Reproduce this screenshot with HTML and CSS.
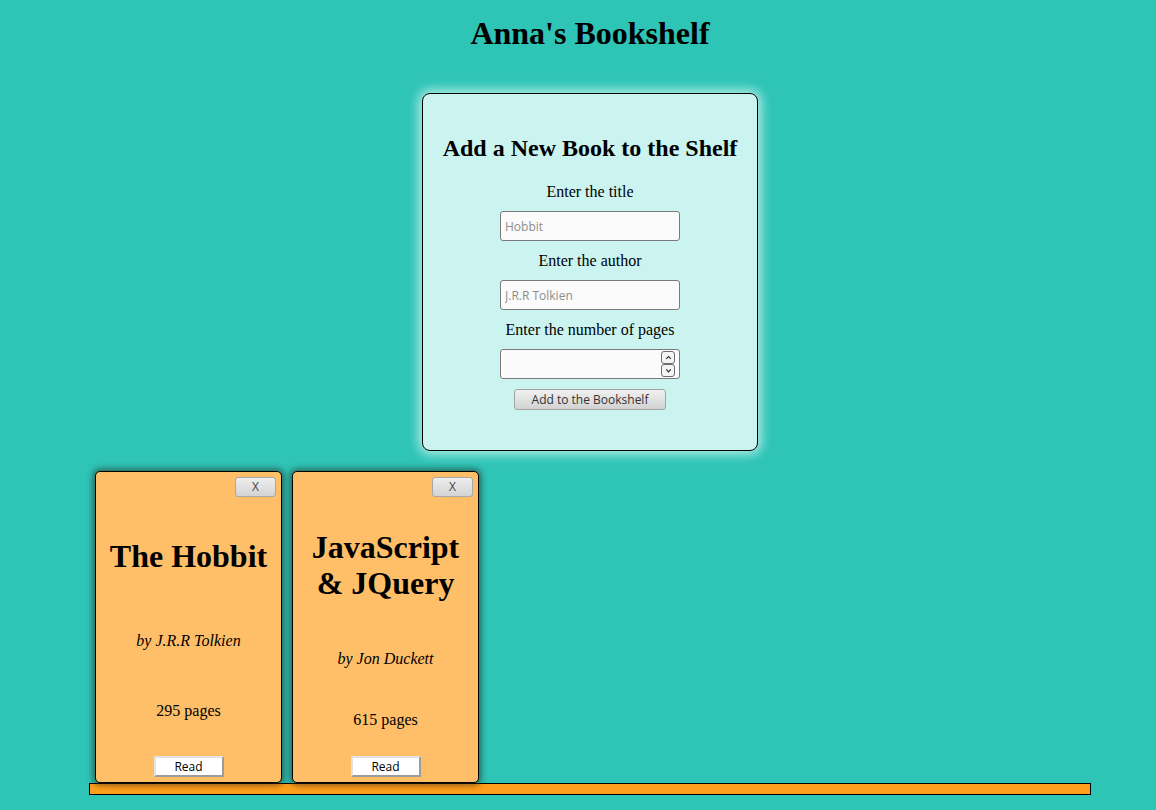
FILE: index.html
```
<!DOCTYPE html>
<html lang="en">
<head>
<meta charset="utf-8">
<title>Anna's Bookshelf</title>
<link rel="stylesheet" href="styles.css">
</head>
<body>
<div class="page">
  <h1 class="site-title">Anna's Bookshelf</h1>

  <form class="add-form">
    <h2 class="form-title">Add a New Book to the Shelf</h2>
    <label class="field-label" for="title">Enter the title</label>
    <input class="field" id="title" type="text" placeholder="Hobbit">
    <label class="field-label" for="author">Enter the author</label>
    <input class="field" id="author" type="text" placeholder="J.R.R Tolkien">
    <label class="field-label" for="pages">Enter the number of pages</label>
    <div class="num-wrap">
      <input class="field" id="pages" type="text">
      <div class="spinner">
        <span class="spin-btn">
          <svg viewBox="0 0 10 10" width="9" height="9"><path d="M2.5 6.5 L5 3.8 L7.5 6.5" fill="none" stroke="#222" stroke-width="1.2"/></svg>
        </span>
        <span class="spin-btn">
          <svg viewBox="0 0 10 10" width="9" height="9"><path d="M2.5 3.8 L5 6.5 L7.5 3.8" fill="none" stroke="#222" stroke-width="1.2"/></svg>
        </span>
      </div>
    </div>
    <button class="add-btn" type="button">Add to the Bookshelf</button>
  </form>

  <section class="library">
    <div class="books">
      <article class="book">
        <button class="remove-btn" type="button">X</button>
        <h1 class="book-title">The Hobbit</h1>
        <p class="book-author">by J.R.R Tolkien</p>
        <p class="book-pages">295 pages</p>
        <button class="read-btn" type="button">Read</button>
      </article>
      <article class="book">
        <button class="remove-btn" type="button">X</button>
        <h1 class="book-title">JavaScript &amp; JQuery</h1>
        <p class="book-author">by Jon Duckett</p>
        <p class="book-pages">615 pages</p>
        <button class="read-btn" type="button">Read</button>
      </article>
    </div>
    <div class="shelf"></div>
  </section>
</div>
</body>
</html>
```

FILE: styles.css
```
html, body {
  margin: 0;
  padding: 0;
}

body {
  background: #2ec4b6;
  font-family: "Liberation Serif", "Times New Roman", serif;
  font-size: 16px;
  color: #000;
  height: 810px;
  overflow: hidden;
}

.page {
  margin-left: 24px;
  width: 1132px;
}

.site-title {
  margin: 15px 0 0;
  font-size: 32px;
  line-height: 37px;
  font-weight: bold;
  text-align: center;
}

.add-form {
  box-sizing: border-box;
  width: 336px;
  margin: 41px auto 0;
  padding: 20px 20px 40px;
  background: #cbf3f0;
  border: 1px solid #000;
  border-radius: 8px;
  box-shadow: 0 0 12px 3px rgba(203, 243, 240, 0.9);
  display: flex;
  flex-direction: column;
  align-items: center;
}

.form-title {
  margin: 20px 0;
  font-size: 24px;
  line-height: 28px;
  font-weight: bold;
  white-space: nowrap;
}

.field-label {
  display: block;
  padding-top: 1px;
  line-height: 18px;
}

.field {
  box-sizing: border-box;
  width: 180px;
  height: 30px;
  margin: 10px 0;
  padding: 0 4px;
  border: 1px solid #7a7a7a;
  border-radius: 3px;
  background: #fbfbfb;
  font-family: "Open Sans", sans-serif;
  font-size: 12px;
  color: #222;
  outline: none;
}

.field::placeholder {
  color: #8d8d8d;
}

.num-wrap {
  position: relative;
  margin: 10px 0;
}

.num-wrap .field {
  margin: 0;
  display: block;
}

.spinner {
  position: absolute;
  top: 2px;
  right: 5px;
  display: flex;
  flex-direction: column;
}

.spin-btn {
  box-sizing: border-box;
  width: 14px;
  height: 13px;
  border: 1px solid #6e6e6e;
  border-radius: 3px;
  background: #f4f4f4;
  display: flex;
  align-items: center;
  justify-content: center;
}

.add-btn {
  box-sizing: border-box;
  width: 152px;
  height: 21px;
  margin: 0;
  padding: 0;
  border: 1px solid #a3a3a3;
  border-radius: 3px;
  background: linear-gradient(#f1f1f1, #d2d2d2);
  font-family: "Open Sans", sans-serif;
  font-size: 12px;
  color: #333;
  line-height: 19px;
}

.library {
  width: 1002px;
  margin: 20px auto 0;
}

.books {
  display: flex;
  align-items: flex-end;
  gap: 10px;
  padding-left: 6px;
}

.book {
  width: 175px;
  height: 300px;
  padding: 5px;
  background: #ffbf69;
  border: 1px solid #000;
  border-radius: 5px;
  box-shadow: 0 0 6px 2px rgba(40, 30, 20, 0.6);
  display: flex;
  flex-direction: column;
  justify-content: space-between;
  text-align: center;
}

.remove-btn {
  align-self: flex-end;
  box-sizing: border-box;
  width: 41px;
  height: 20px;
  margin: 0;
  padding: 0;
  border: 1px solid #a8a8a8;
  border-radius: 3px;
  background: linear-gradient(#eeeeee, #d4d4d4);
  font-family: "Open Sans", sans-serif;
  font-size: 12px;
  color: #444;
  line-height: 18px;
}

.book-title {
  margin: 21.44px 0;
  font-size: 32px;
  font-weight: bold;
  line-height: 36px;
}

.book-author {
  margin: 16px 0;
  font-style: italic;
  line-height: 18px;
}

.book-pages {
  margin: 16px 0;
  line-height: 18px;
}

.read-btn {
  align-self: center;
  box-sizing: border-box;
  width: 70px;
  height: 21px;
  margin: 0;
  padding: 0;
  border: 2px solid;
  border-color: #e2e2e2 #9c9c9c #9c9c9c #e2e2e2;
  background: #fff;
  font-family: "Open Sans", sans-serif;
  font-size: 12px;
  color: #000;
  line-height: 17px;
}

.shelf {
  box-sizing: border-box;
  height: 12px;
  background: #ff9f1c;
  border: 1px solid #000;
}
```
